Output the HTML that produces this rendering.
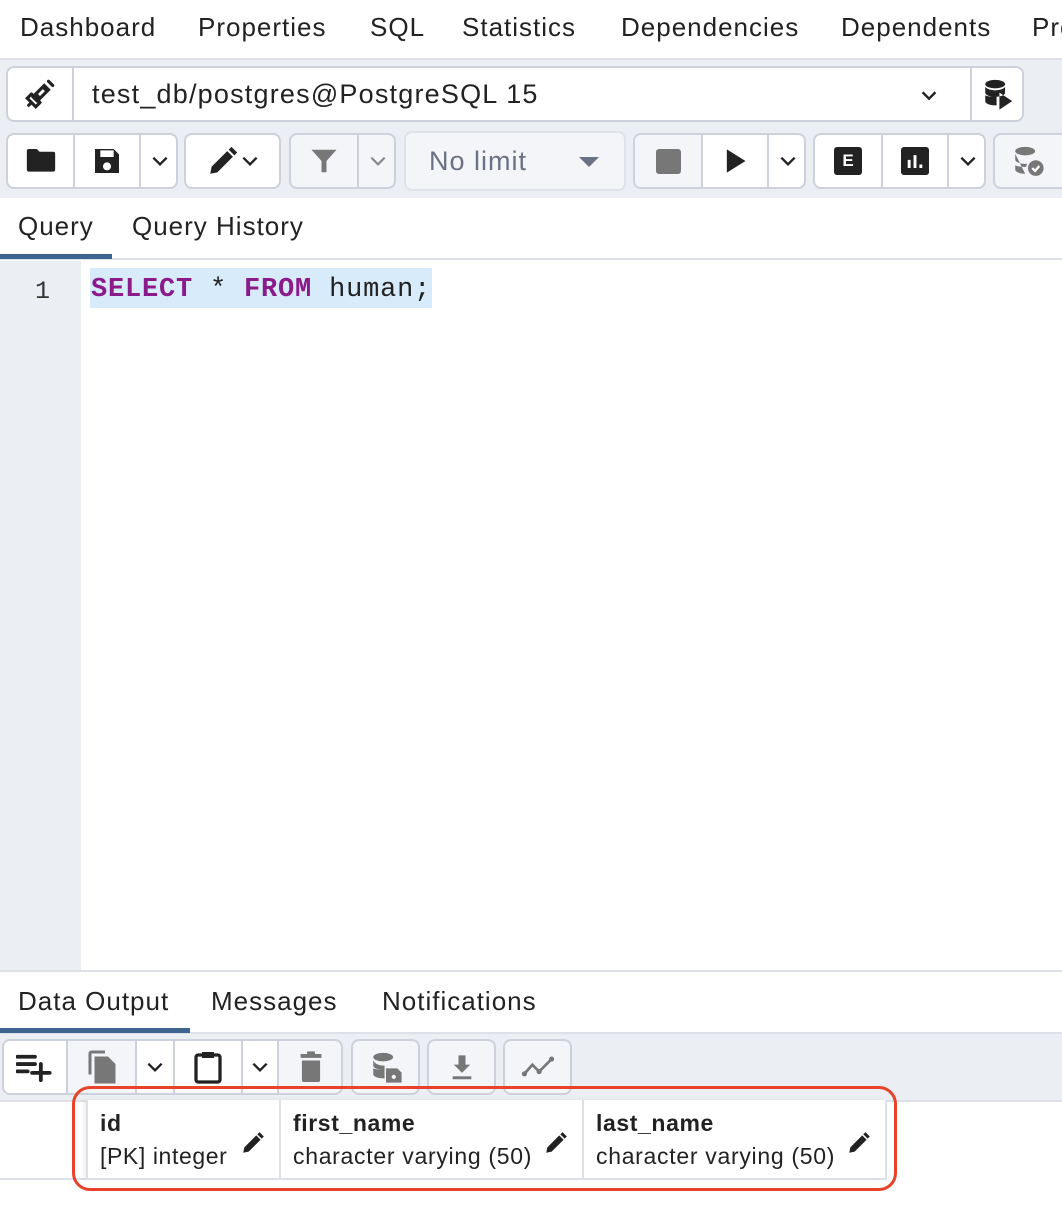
<!DOCTYPE html>
<html><head><meta charset="utf-8">
<style>
*{box-sizing:border-box;margin:0;padding:0}
body{width:1062px;height:1228px;overflow:hidden;background:#fff;font-family:"Liberation Sans",Arial,sans-serif;color:#222;position:relative}
.a{position:absolute}
.gray{background:#ebeef3}
.box{position:absolute;border:2px solid #cdd1db;border-radius:8px;background:#fff;overflow:hidden}
.dis{background:#f4f5f8}
.cell{position:absolute;top:0;bottom:0;border-left:2px solid #cdd1db;display:flex;align-items:center;justify-content:center}
.cell.f{border-left:none}
.tab{position:absolute;font-size:26px;color:#222;letter-spacing:1px;white-space:nowrap}
.g{letter-spacing:0.6px;white-space:nowrap}
svg{display:block}
</style></head><body>

<div class="a" style="left:0;top:0;width:1062px;height:58px;background:#fff"></div>
<div class="tab" style="left:20px;top:12px">Dashboard</div>
<div class="tab" style="left:198px;top:12px">Properties</div>
<div class="tab" style="left:370px;top:12px">SQL</div>
<div class="tab" style="left:462px;top:12px">Statistics</div>
<div class="tab" style="left:621px;top:12px">Dependencies</div>
<div class="tab" style="left:841px;top:12px">Dependents</div>
<div class="tab" style="left:1032px;top:12px">Pro</div>

<div class="a gray" style="left:0;top:58px;width:1062px;height:140px;border-top:2px solid #dde0e6"></div>

<div class="box" style="left:6px;top:66px;width:1018px;height:56px">
  <div class="cell f" style="left:0;width:64px"><svg width="34" height="34" viewBox="0 0 24 24"><g fill="none" stroke="#222" stroke-width="2.2" stroke-linecap="round"><path d="M7 14l3 3M14 7l3 3M9 12l6-6 3 3-6 6zM12 18l-3 3-6-6 3-3M6 12l6 6M18 3l3 3M4 20l2-2"/></g></svg></div>
  <div class="cell" style="left:64px;width:900px;justify-content:flex-start;padding-left:18px;font-size:27px;color:#222;letter-spacing:1.2px">test_db/postgres@PostgreSQL 15
    <svg class="a" style="left:844px;top:16px" width="22" height="22" viewBox="0 0 24 24"><path d="M5 9l7 7 7-7" fill="none" stroke="#222" stroke-width="2.6"/></svg></div>
  <div class="cell" style="left:962px;width:54px"><svg width="34" height="34" viewBox="0 0 24 24"><g fill="#222"><ellipse cx="10" cy="5" rx="7" ry="3"/><path d="M3 7v4c0 1.6 3 3 7 3s7-1.4 7-3V7c-1 1.5-4 2.4-7 2.4S4 8.5 3 7zM3 13v4c0 1.6 3 3 7 3h1v-6h-1c-4 0-6-.5-7-1zM13 11l9 6-9 6z"/></g></svg></div>
</div>

<div class="box" style="left:6px;top:133px;width:172px;height:56px">
  <div class="cell f" style="left:0;width:65px"><svg width="34" height="34" viewBox="0 0 24 24"><path d="M2 5c0-1 .5-1.5 1.5-1.5H9l2 2h9.5c1 0 1.5.5 1.5 1.5v11c0 1-.5 1.5-1.5 1.5h-17C2.5 19.5 2 19 2 18z" fill="#222"/></svg></div>
  <div class="cell" style="left:65px;width:66px"><svg width="32" height="32" viewBox="0 0 24 24"><path d="M3 3h14l4 4v14H3zM7 4v5h10V4z M12 13a3 3 0 1 0 .01 0z" fill="#222" fill-rule="evenodd"/></svg></div>
  <div class="cell" style="left:131px;width:40px"><svg width="20" height="20" viewBox="0 0 24 24"><path d="M4 8l8 8 8-8" fill="none" stroke="#222" stroke-width="2.8"/></svg></div>
</div>
<div class="box" style="left:184px;top:133px;width:97px;height:56px">
  <div class="cell f" style="left:0;width:93px"><svg width="34" height="34" viewBox="0 0 24 24"><path d="M3 21l1-5L15 5l4 4L8 20zM16 4l2-2 4 4-2 2z" fill="#222"/></svg><svg width="20" height="20" viewBox="0 0 24 24"><path d="M4 8l8 8 8-8" fill="none" stroke="#222" stroke-width="2.8"/></svg></div>
</div>
<div class="box dis" style="left:289px;top:133px;width:107px;height:56px">
  <div class="cell f" style="left:0;width:66px"><svg width="30" height="30" viewBox="0 0 24 24"><path d="M2 3h20l-8 9v9h-4v-9z" fill="#777"/></svg></div>
  <div class="cell" style="left:66px;width:40px"><svg width="20" height="20" viewBox="0 0 24 24"><path d="M4 8l8 8 8-8" fill="none" stroke="#888" stroke-width="2.6"/></svg></div>
</div>
<div class="box dis" style="left:404px;top:131px;width:222px;height:60px;border-color:#dfe2e8">
  <div class="a" style="left:23px;top:13px;font-size:27px;color:#6a7184;letter-spacing:1px">No limit</div>
  <svg class="a" style="left:172px;top:22px" width="22" height="14" viewBox="0 0 22 14"><path d="M1 2h20L11 12z" fill="#6a7184"/></svg>
</div>
<div class="box" style="left:633px;top:133px;width:173px;height:56px">
  <div class="cell f dis" style="left:0;width:66px"><div style="width:25px;height:25px;background:#777;border-radius:3px"></div></div>
  <div class="cell" style="left:66px;width:66px"><svg width="28" height="28" viewBox="0 0 24 24"><path d="M5 2l16 10L5 22z" fill="#222"/></svg></div>
  <div class="cell" style="left:132px;width:40px"><svg width="20" height="20" viewBox="0 0 24 24"><path d="M4 8l8 8 8-8" fill="none" stroke="#222" stroke-width="2.8"/></svg></div>
</div>
<div class="box" style="left:813px;top:133px;width:173px;height:56px">
  <div class="cell f" style="left:0;width:66px"><div style="width:28px;height:28px;background:#222;border-radius:3px;color:#fff;font-weight:bold;font-size:17px;text-align:center;line-height:28px">E</div></div>
  <div class="cell" style="left:66px;width:66px"><svg width="28" height="28" viewBox="0 0 24 24"><rect x="0" y="0" width="24" height="24" rx="2.5" fill="#222"/><path d="M7 11v7M12 7v11M17 15v3" stroke="#fff" stroke-width="2.5"/></svg></div>
  <div class="cell" style="left:132px;width:40px"><svg width="20" height="20" viewBox="0 0 24 24"><path d="M4 8l8 8 8-8" fill="none" stroke="#222" stroke-width="2.8"/></svg></div>
</div>
<div class="box dis" style="left:993px;top:133px;width:80px;height:56px">
  <div class="cell f" style="left:0;width:66px"><svg width="34" height="34" viewBox="0 0 24 24"><g fill="#777"><ellipse cx="10" cy="5" rx="7" ry="3"/><path d="M3 7v4c0 1.6 3 3 7 3 .5 0 1 0 1.5-.1-.5.9-.8 1.7-.9 2.3H10c-4 0-6-.5-7-1.2v3c0 1.6 3 3 7 3"/><circle cx="17.5" cy="17" r="5.5"/></g><path d="M15 17l2 2 3-3.5" stroke="#fff" stroke-width="1.6" fill="none"/></svg></div>
</div>

<div class="a" style="left:0;top:198px;width:1062px;height:62px;background:#fff;border-bottom:2px solid #dde0e6"></div>
<div class="tab" style="left:18px;top:211px">Query</div>
<div class="tab" style="left:132px;top:211px">Query History</div>
<div class="a" style="left:0;top:254px;width:112px;height:5px;background:#3d6590"></div>

<div class="a gray" style="left:0;top:261px;width:81px;height:710px"></div>
<div class="a" style="left:35px;top:277px;font-family:'Liberation Mono',monospace;font-size:25px;color:#333">1</div>
<div class="a" style="left:90px;top:268px;width:342px;height:40px;background:#d8ebfa"></div>
<div class="a" style="left:91px;top:275px;font-family:'Liberation Mono',monospace;font-size:27px;color:#222;letter-spacing:0.8px;white-space:nowrap"><span style="color:#8b1a8b;font-weight:bold">SELECT</span> * <span style="color:#8b1a8b;font-weight:bold">FROM</span> human;</div>

<div class="a" style="left:0;top:970px;width:1062px;height:64px;background:#fff;border-top:2px solid #dde0e6;border-bottom:2px solid #dde0e6"></div>
<div class="tab" style="left:18px;top:986px">Data Output</div>
<div class="tab" style="left:211px;top:986px">Messages</div>
<div class="tab" style="left:382px;top:986px">Notifications</div>
<div class="a" style="left:0;top:1028px;width:190px;height:5px;background:#3d6590"></div>

<div class="a gray" style="left:0;top:1034px;width:1062px;height:66px"></div>
<div class="box dis" style="left:2px;top:1039px;width:341px;height:56px">
  <div class="cell f" style="left:0;width:62px;background:#fff"><svg width="38" height="30" viewBox="0 0 26 20"><path d="M1 3h12M1 8h12M1 13h7M17 8v11M11 14h12" stroke="#222" stroke-width="2.6" stroke-linecap="round"/></svg></div>
  <div class="cell" style="left:62px;width:69px"><svg width="30" height="36" viewBox="0 0 20 24"><path d="M1 3v14h2V3h9V1H3C2 1 1 2 1 3z" fill="#777"/><path d="M5 5h9l5 5v13H5z" fill="#777"/></svg></div>
  <div class="cell" style="left:131px;width:38px;background:#fff"><svg width="20" height="20" viewBox="0 0 24 24"><path d="M4 8l8 8 8-8" fill="none" stroke="#222" stroke-width="2.8"/></svg></div>
  <div class="cell" style="left:169px;width:68px;background:#fff"><svg width="30" height="36" viewBox="0 0 20 24"><rect x="2" y="4" width="16" height="18" rx="1.5" fill="none" stroke="#222" stroke-width="2.2"/><rect x="6" y="2" width="8" height="4" fill="#222"/></svg></div>
  <div class="cell" style="left:237px;width:36px;background:#fff"><svg width="20" height="20" viewBox="0 0 24 24"><path d="M4 8l8 8 8-8" fill="none" stroke="#222" stroke-width="2.8"/></svg></div>
  <div class="cell" style="left:273px;width:66px"><svg width="26" height="32" viewBox="0 0 20 24"><rect x="2" y="2" width="16" height="3" fill="#777"/><rect x="7" y="0" width="6" height="3" fill="#777"/><path d="M3 7h14v15c0 1-.5 1.5-1.5 1.5h-11C3.5 23.5 3 23 3 22z" fill="#777"/></svg></div>
</div>
<div class="box dis" style="left:351px;top:1039px;width:69px;height:56px"><div class="cell f" style="left:0;width:65px"><svg width="34" height="34" viewBox="0 0 24 24"><g fill="#777"><ellipse cx="10" cy="5" rx="7" ry="3"/><path d="M3 7v4c0 1.6 3 3 7 3h1v-3c-4 0-7-1-8-4zM3 13v4c0 1.6 3 3 7 3h1v-6h-1c-4 0-6-.5-7-1z"/><path d="M12 13h8l3 3v7H12z"/></g><circle cx="17.5" cy="19" r="1.5" fill="#f4f5f8"/></svg></div></div>
<div class="box dis" style="left:427px;top:1039px;width:69px;height:56px"><div class="cell f" style="left:0;width:65px"><svg width="28" height="30" viewBox="0 0 24 24"><path d="M9 2h6v8h4l-7 7-7-7h4z" fill="#777"/><rect x="4" y="20" width="16" height="2.5" fill="#777"/></svg></div></div>
<div class="box dis" style="left:503px;top:1039px;width:69px;height:56px"><div class="cell f" style="left:0;width:65px"><svg width="34" height="24" viewBox="0 0 30 20"><path d="M3 16l7-8 6 6 11-11" fill="none" stroke="#777" stroke-width="2.4"/><circle cx="3" cy="16" r="2.3" fill="#777"/><circle cx="16" cy="14" r="2.3" fill="#777"/><circle cx="27" cy="3" r="2.3" fill="#777"/></svg></div></div>

<div class="a" style="left:0;top:1100px;width:1062px;height:2px;background:#dde0e6"></div>
<div class="a" style="left:0;top:1178px;width:88px;height:2px;background:#dde0e6"></div>
<div class="a" style="left:86px;top:1100px;width:801px;height:80px;border:2px solid #dde0e6;border-top:none;background:#fff;box-shadow:-3px 0 4px rgba(0,0,0,0.06)"></div>
<div class="a" style="left:279px;top:1100px;width:2px;height:80px;background:#dde0e6"></div>
<div class="a" style="left:582px;top:1100px;width:2px;height:80px;background:#dde0e6"></div>

<div class="a g" style="left:100px;top:1110px;font-size:23px;font-weight:bold;color:#222">id</div>
<div class="a g" style="left:100px;top:1143px;font-size:23px;color:#222">[PK] integer</div>
<div class="a g" style="left:293px;top:1110px;font-size:23px;font-weight:bold;color:#222">first_name</div>
<div class="a g" style="left:293px;top:1143px;font-size:23px;color:#222;letter-spacing:0.7px">character varying (50)</div>
<div class="a g" style="left:596px;top:1110px;font-size:23px;font-weight:bold;color:#222">last_name</div>
<div class="a g" style="left:596px;top:1143px;font-size:23px;color:#222;letter-spacing:0.7px">character varying (50)</div>
<svg class="a" style="left:240px;top:1130px" width="26" height="26" viewBox="0 0 24 24"><path d="M3 21l1-5L15 5l4 4L8 20zM16 4l2-2 4 4-2 2z" fill="#222"/></svg>
<svg class="a" style="left:543px;top:1130px" width="26" height="26" viewBox="0 0 24 24"><path d="M3 21l1-5L15 5l4 4L8 20zM16 4l2-2 4 4-2 2z" fill="#222"/></svg>
<svg class="a" style="left:846px;top:1130px" width="26" height="26" viewBox="0 0 24 24"><path d="M3 21l1-5L15 5l4 4L8 20zM16 4l2-2 4 4-2 2z" fill="#222"/></svg>

<div class="a" style="left:72px;top:1086px;width:825px;height:105px;border:3px solid #e8432a;border-radius:18px"></div>

</body></html>
